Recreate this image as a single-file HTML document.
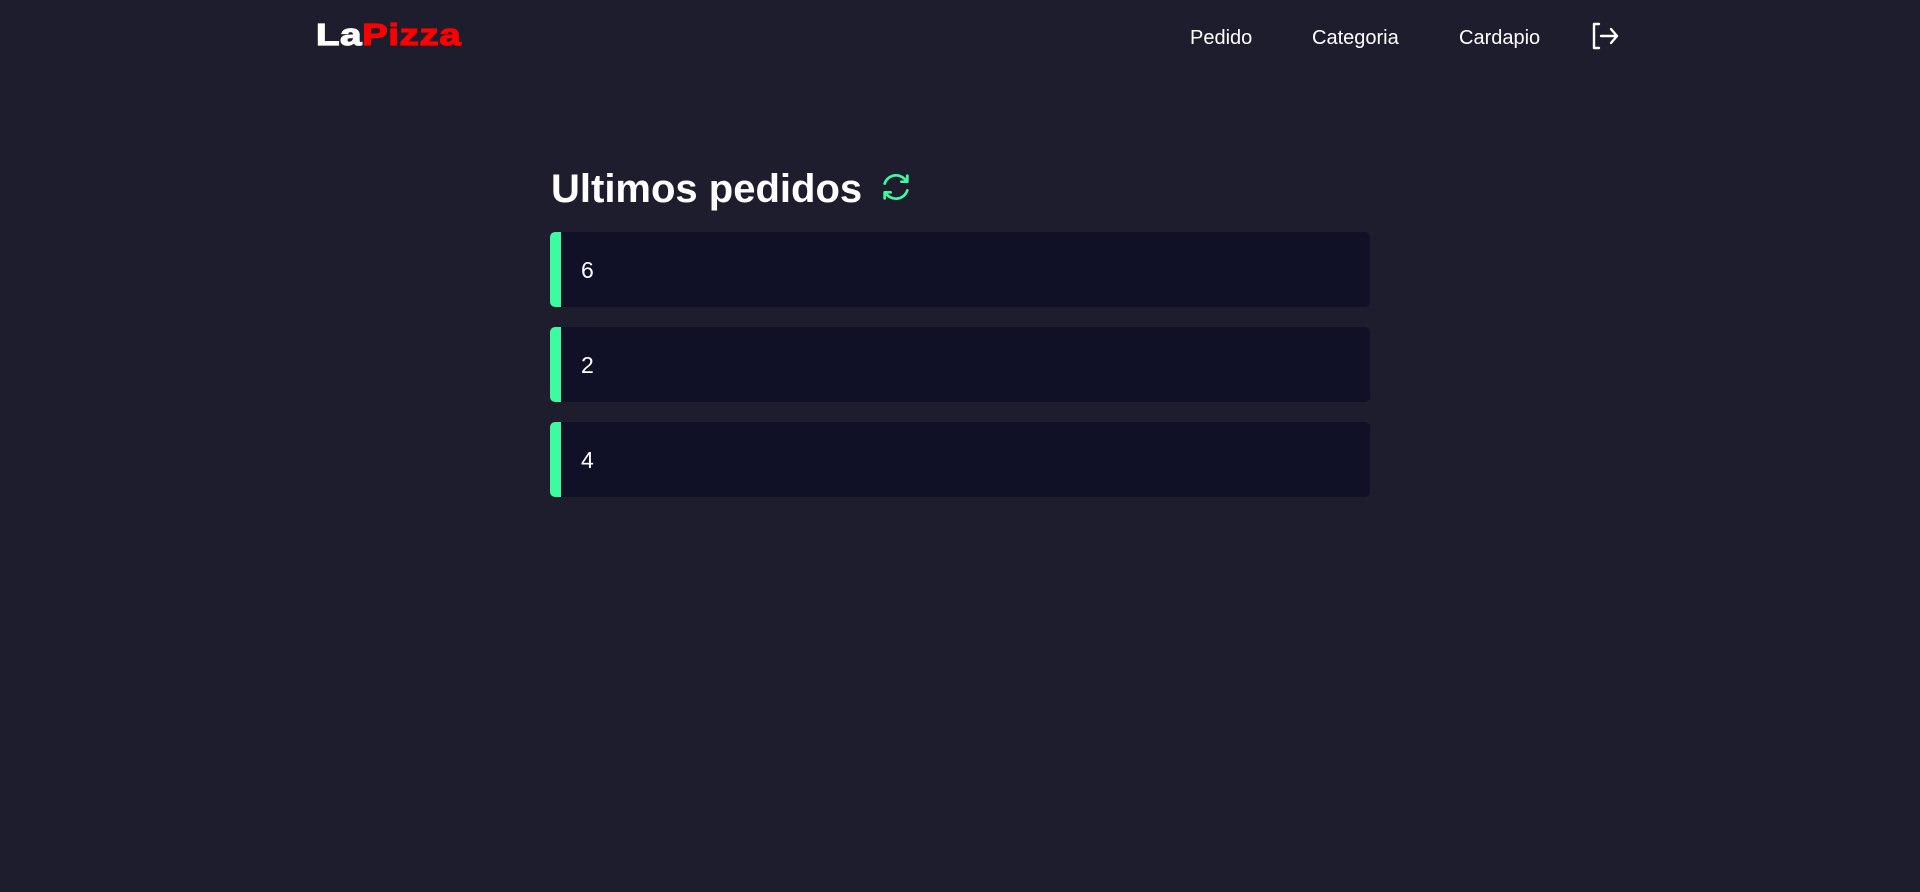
<!DOCTYPE html>
<html><head><meta charset="utf-8"><style>
*{margin:0;padding:0;box-sizing:border-box}
body{width:1920px;height:892px;background:#1d1d2e;font-family:"Liberation Sans",Arial,sans-serif;color:#fff;position:relative;overflow:hidden}
.logo{position:absolute;left:316px;top:17px;font-size:31px;font-weight:bold;-webkit-text-stroke:1.2px currentColor;transform:scaleX(1.24);transform-origin:left top;letter-spacing:0.5px}
.logo span{color:#ff0000}
.nav{position:absolute;top:27px;font-size:20px}
h1{position:absolute;left:551px;top:167px;font-size:40px;font-weight:bold}
.card{position:absolute;left:550px;width:820px;height:75px;background:#101026;border-radius:5px;overflow:hidden}
.card:before{content:"";position:absolute;left:0;top:0;bottom:0;width:11px;background:#3dfba0}
.card div{position:absolute;left:31px;top:25px;font-size:23px}
</style></head><body>
<div class="logo">La<span>Pizza</span></div>
<div class="nav" style="left:1190px">Pedido</div>
<div class="nav" style="left:1312px">Categoria</div>
<div class="nav" style="left:1459px">Cardapio</div>
<svg style="position:absolute;left:1590px;top:22px" width="30" height="28" viewBox="0 0 30 28" fill="none" stroke="#fff" stroke-width="2.4" stroke-linecap="round" stroke-linejoin="round"><path d="M9 2H4v24h5"/><path d="M11 14h16M21 7l6 7-6 7"/></svg>
<h1>Ultimos pedidos</h1>
<svg style="position:absolute;left:880px;top:171px" width="32" height="32" viewBox="0 0 24 24" fill="none" stroke="#3dfba0" stroke-width="2" stroke-linecap="round" stroke-linejoin="round"><path d="M3.5 9.5A9 9 0 0 1 20 8"/><path d="M20.5 3.5V8h-4.5"/><path d="M20.5 14.5A9 9 0 0 1 4 16"/><path d="M3.5 20.5V16h4.5"/></svg>
<div class="card" style="top:232px"><div>6</div></div>
<div class="card" style="top:327px"><div>2</div></div>
<div class="card" style="top:422px"><div>4</div></div>
</body></html>
